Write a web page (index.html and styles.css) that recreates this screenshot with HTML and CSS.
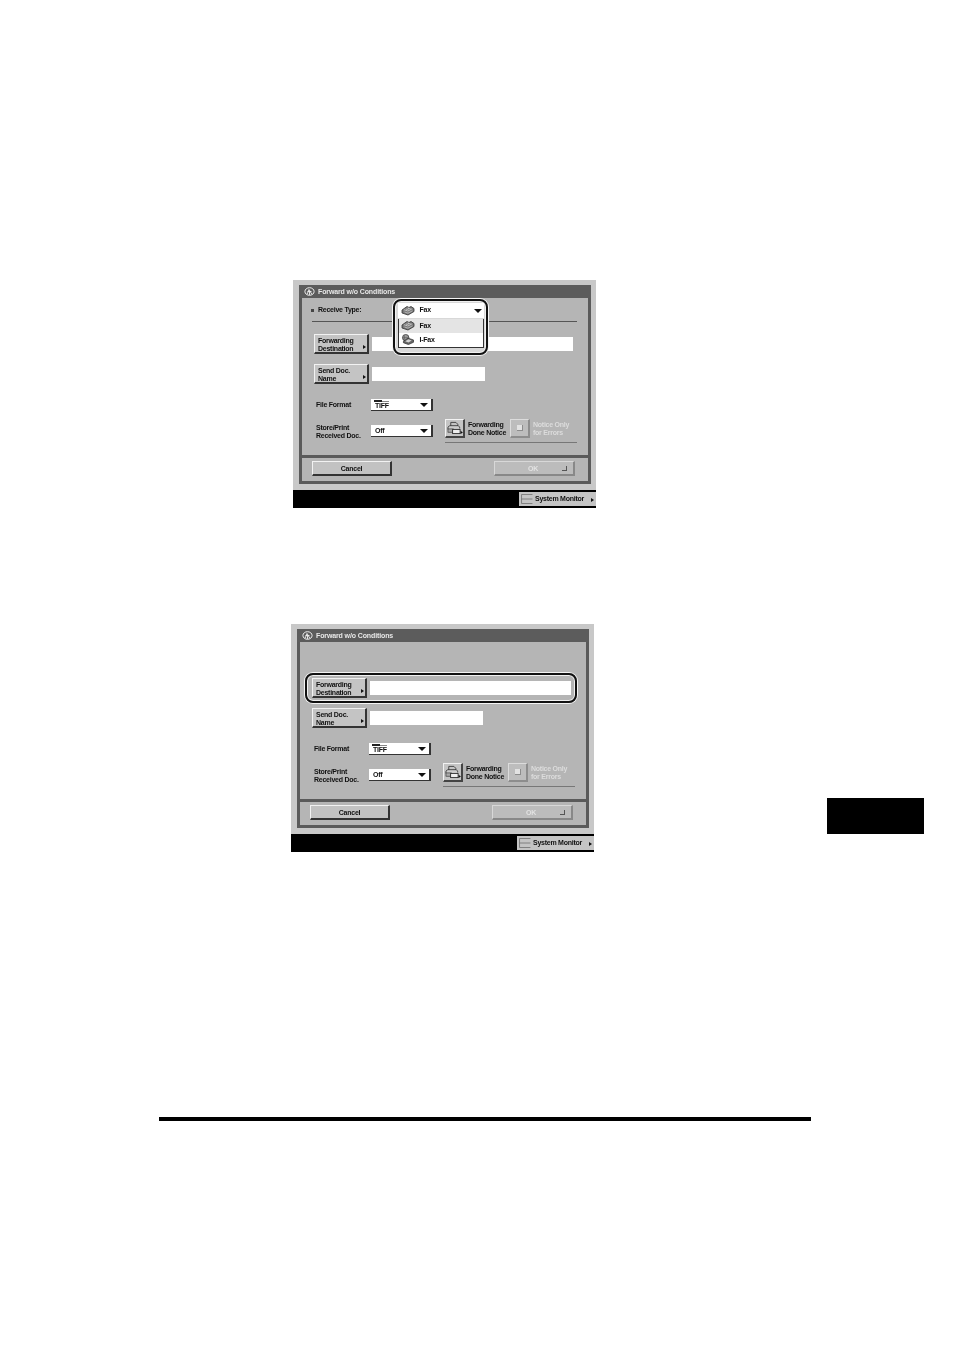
FILE: index.html
```html
<!DOCTYPE html>
<html lang="en">
<head>
    <meta charset="UTF-8">
    <title>Forward w/o Conditions</title>
    <link rel="stylesheet" href="styles.css">
</head>
<body>
    <svg class="defs" width="0" height="0">
        <symbol id="logo" viewBox="0 0 11 9">
            <ellipse cx="5.5" cy="4.5" rx="4.6" ry="3.8" fill="none" stroke="#eee" stroke-width="1"/>
            <path d="M3 7.5 L5 2.5 L8 7.5 M3.5 4.5 H7.5 M5.5 4.5 V8" fill="none" stroke="#eee" stroke-width="0.9"/>
        </symbol>
        <symbol id="fax" viewBox="0 0 14 11">
            <path d="M1 5 L6 1.5 L8 2.5 L10 1.5 L13 3.5 L13 6.5 L7 10 L1 8 Z" fill="#777" stroke="#333" stroke-width="0.8"/>
            <path d="M2.5 5 L7 2.6 L11.5 4 L7 6.6 Z" fill="#c4c4c4"/>
            <path d="M4 4.6 L7 3.4 M6 5.4 L9.5 3.8" stroke="#555" stroke-width="0.6"/>
            <path d="M3.5 7 L7 8.2 L11.5 5.8" fill="none" stroke="#ccc" stroke-width="0.7"/>
        </symbol>
        <symbol id="ifax" viewBox="0 0 14 12">
            <circle cx="4.5" cy="4" r="3.5" fill="#9a9a9a" stroke="#333" stroke-width="0.8"/>
            <path d="M3 1.5 V6.5 M1 4 H8" stroke="#444" stroke-width="0.5"/>
            <path d="M2 8 L7 4.5 L13 6.5 L13 9 L7.5 11.5 L2 9.5 Z" fill="#666" stroke="#333" stroke-width="0.8"/>
            <path d="M4 8 L7.5 5.8 L11 7 L7.5 9.2 Z" fill="#d4d4d4"/>
        </symbol>
        <symbol id="forward" viewBox="0 0 18 15">
            <path d="M5 6 V1.5 H10.5 L12.5 3.5 V6" fill="none" stroke="#333" stroke-width="0.9"/>
            <path d="M2 9 V6.5 L4 5 H13 L14.5 6.5 V8" fill="#ccc" stroke="#333" stroke-width="0.9"/>
            <rect x="2" y="8.5" width="6" height="3.5" fill="#aaa" stroke="#333" stroke-width="0.7"/>
            <rect x="7" y="9" width="8" height="4.5" fill="#eee" stroke="#222" stroke-width="0.9"/>
            <path d="M15.5 10.5 L18 12.2 L15.5 14 Z" fill="#111"/>
        </symbol>
        <symbol id="tiff" viewBox="0 0 15 3">
            <rect x="0" y="0" width="8" height="2" fill="#222"/>
            <path d="M8 1.5 H15" fill="none" stroke="#555" stroke-width="0.7"/>
        </symbol>
        <symbol id="monitor" viewBox="0 0 13 11">
            <path d="M0.5 10.5 V0.5 H12.5 M0.5 5.5 H12.5 M0.5 10.5 H12.5" fill="none" stroke="#666" stroke-width="0.8"/>
        </symbol>
    </svg>

    <div class="page">
        <div class="doc">
            <section class="screen screen-first">
                <div class="dialog">
                    <div class="title-bar">
                        <svg class="logo"><use href="#logo"/></svg>
                        <span>Forward w/o Conditions</span>
                    </div>
                    <div class="receive-row">
                        <i class="bullet"></i>
                        <span class="label">Receive Type:</span>
                    </div>
                    <div class="field-row dest-row">
                        <div class="btn-more"><span>Forwarding<br>Destination</span><i class="tri"></i></div>
                        <div class="field field-long"></div>
                    </div>
                    <div class="field-row send-row">
                        <div class="btn-more"><span>Send Doc.<br>Name</span><i class="tri"></i></div>
                        <div class="field field-short"></div>
                    </div>
                    <div class="format-row">
                        <span class="label row-label">File Format</span>
                        <div class="select select-tiff">
                            <svg class="tiff-mark"><use href="#tiff"/></svg>
                            <span class="tiff-text">TIFF</span>
                            <i class="down"></i>
                        </div>
                    </div>
                    <div class="store-row">
                        <span class="label row-label store-label">Store/Print<br>Received Doc.</span>
                        <div class="select store-select"><span>Off</span><i class="down"></i></div>
                        <div class="notice-group">
                            <div class="btn-icon"><svg class="forward-icon"><use href="#forward"/></svg></div>
                            <span class="label notice-text">Forwarding<br>Done Notice</span>
                            <div class="btn-icon btn-off"><i class="dot"></i></div>
                            <span class="label notice-text text-off">Notice Only<br>for Errors</span>
                        </div>
                    </div>
                    <div class="footer">
                        <div class="btn-wide">Cancel</div>
                        <div class="btn-wide btn-ok">OK<i class="enter"></i></div>
                    </div>
                </div>
                <div class="status-bar">
                    <div class="btn-monitor">
                        <svg class="monitor-icon"><use href="#monitor"/></svg>
                        <span>System Monitor</span>
                        <i class="tri"></i>
                    </div>
                </div>
                <div class="ring ring-popup">
                    <div class="popup-head">
                        <svg class="fax-icon"><use href="#fax"/></svg>
                        <span>Fax</span>
                        <i class="down"></i>
                    </div>
                    <div class="popup-list">
                        <div class="popup-item popup-current">
                            <svg class="fax-icon"><use href="#fax"/></svg>
                            <span>Fax</span>
                        </div>
                        <div class="popup-item">
                            <svg class="fax-icon"><use href="#ifax"/></svg>
                            <span>I-Fax</span>
                        </div>
                    </div>
                </div>
            </section>

            <section class="screen screen-second">
                <div class="dialog">
                    <div class="title-bar">
                        <svg class="logo"><use href="#logo"/></svg>
                        <span>Forward w/o Conditions</span>
                    </div>
                    <div class="receive-row receive-blank"></div>
                    <div class="field-row dest-row">
                        <div class="btn-more"><span>Forwarding<br>Destination</span><i class="tri"></i></div>
                        <div class="field field-long"></div>
                    </div>
                    <div class="field-row send-row">
                        <div class="btn-more"><span>Send Doc.<br>Name</span><i class="tri"></i></div>
                        <div class="field field-short"></div>
                    </div>
                    <div class="format-row">
                        <span class="label row-label">File Format</span>
                        <div class="select select-tiff">
                            <svg class="tiff-mark"><use href="#tiff"/></svg>
                            <span class="tiff-text">TIFF</span>
                            <i class="down"></i>
                        </div>
                    </div>
                    <div class="store-row">
                        <span class="label row-label store-label">Store/Print<br>Received Doc.</span>
                        <div class="select store-select"><span>Off</span><i class="down"></i></div>
                        <div class="notice-group">
                            <div class="btn-icon"><svg class="forward-icon"><use href="#forward"/></svg></div>
                            <span class="label notice-text">Forwarding<br>Done Notice</span>
                            <div class="btn-icon btn-off"><i class="dot"></i></div>
                            <span class="label notice-text text-off">Notice Only<br>for Errors</span>
                        </div>
                    </div>
                    <div class="footer">
                        <div class="btn-wide">Cancel</div>
                        <div class="btn-wide btn-ok">OK<i class="enter"></i></div>
                    </div>
                </div>
                <div class="status-bar">
                    <div class="btn-monitor">
                        <svg class="monitor-icon"><use href="#monitor"/></svg>
                        <span>System Monitor</span>
                        <i class="tri"></i>
                    </div>
                </div>
                <div class="ring ring-dest"></div>
            </section>

            <div class="rule"></div>
        </div>
        <div class="edge-tab"></div>
    </div>
</body>
</html>
```

FILE: styles.css
```css
body {
    margin: 0;
    background-color: #fff;
    font-family: "Liberation Sans", Arial, sans-serif;
    font-size: 7px;
    font-weight: bold;
    line-height: 7.5px;
    letter-spacing: -0.25px;
    color: #111;
}

.defs {
    position: absolute;
}

.page {
    display: flex;
    align-items: flex-start;
}

.doc {
    width: 827px;
    padding-top: 280px;
}

.edge-tab {
    width: 97px;
    height: 36px;
    margin-top: 798px;
    background-color: #000;
}

.rule {
    width: 652px;
    height: 4px;
    margin: 265px 0 0 159px;
    background-color: #000;
}

.screen {
    position: relative;
    width: 303px;
    padding-top: 5px;
    box-sizing: border-box;
    background-color: #c8c8c8;
    filter: blur(0.35px);
}

.screen-first { margin-left: 293px; }
.screen-second { margin: 116px 0 0 291px; }

.dialog {
    display: flex;
    flex-direction: column;
    height: 199px;
    margin: 0 5px 0 6px;
    border: 3px solid #5a5a5a;
    border-top: 0;
    box-sizing: border-box;
    background-color: #b5b5b5;
}

.title-bar {
    display: flex;
    align-items: center;
    height: 13px;
    margin: 0 -3px;
    padding-left: 5px;
    background-color: #5c5c5c;
    color: #e8e8e8;
    letter-spacing: -0.12px;
}

.logo {
    width: 11px;
    height: 9px;
    margin-right: 3px;
}

.receive-row {
    display: flex;
    align-items: center;
    height: 24px;
    margin: 0 11px 0 10px;
    padding-top: 1px;
    border-bottom: 1px solid #555;
    box-sizing: border-box;
}

.receive-blank { border-bottom: 0; }

.bullet {
    width: 3px;
    height: 3px;
    margin: 0 4px 0 -1px;
    background-color: #444;
}

.label { display: block; }

.field-row {
    display: flex;
    align-items: center;
    padding-left: 12px;
}

.dest-row { margin-top: 12px; }
.send-row { margin-top: 10px; }

.btn-more {
    display: flex;
    align-items: flex-start;
    justify-content: space-between;
    width: 55px;
    height: 20px;
    padding: 2px 1px 1px 3px;
    box-sizing: border-box;
    background-color: #c4c4c4;
    border: 1px solid #f2f2f2;
    border-right: 2px solid #333;
    border-bottom: 2px solid #333;
}

.btn-more .tri { margin-top: 8px; }

.tri {
    width: 0;
    height: 0;
    border-left: 3px solid #111;
    border-top: 2.5px solid transparent;
    border-bottom: 2.5px solid transparent;
}

.field {
    height: 14px;
    margin-left: 3px;
    background-color: #fff;
}

.field-long { width: 201px; }
.field-short { width: 113px; }

.format-row {
    display: flex;
    margin-top: 15px;
    padding-left: 14px;
}

.row-label { width: 55px; }

.format-row .row-label { line-height: 12px; }

.select {
    position: relative;
    display: flex;
    align-items: center;
    justify-content: space-between;
    width: 62px;
    height: 12px;
    padding: 0 3px 0 4px;
    box-sizing: border-box;
    background-color: #fff;
    border-right: 2px solid #333;
    border-bottom: 1px solid #333;
}

.tiff-mark {
    position: absolute;
    left: 3px;
    top: 1px;
    width: 15px;
    height: 3px;
}

.tiff-text {
    margin-top: 3px;
}

.down {
    width: 0;
    height: 0;
    border-top: 4px solid #111;
    border-left: 4px solid transparent;
    border-right: 4px solid transparent;
}

.store-row {
    display: flex;
    align-items: flex-start;
    margin-top: 8px;
    padding-left: 14px;
}

.store-label { margin-top: 5px; }
.store-select { margin-top: 6px; }

.notice-group {
    display: flex;
    align-items: center;
    width: 132px;
    margin-left: 12px;
    padding-bottom: 4px;
    border-bottom: 1px solid #777;
}

.btn-icon {
    display: flex;
    align-items: center;
    justify-content: center;
    width: 20px;
    height: 19px;
    box-sizing: border-box;
    background-color: #c4c4c4;
    border: 1px solid #f2f2f2;
    border-right: 2px solid #444;
    border-bottom: 2px solid #444;
}

.forward-icon {
    width: 17px;
    height: 14px;
}

.notice-text {
    margin-left: 3px;
    width: 42px;
}

.btn-off {
    background-color: #bdbdbd;
    border-right-color: #8d8d8d;
    border-bottom-color: #8d8d8d;
    border-top-color: #dcdcdc;
    border-left-color: #dcdcdc;
}

.dot {
    width: 5px;
    height: 5px;
    background-color: #e2e2e2;
    border-right: 1px solid #8c8c8c;
    border-bottom: 1px solid #8c8c8c;
}

.text-off { color: #dcdcdc; }

.footer {
    display: flex;
    justify-content: space-between;
    margin-top: auto;
    padding: 3px 13px 5px 10px;
    border-top: 3px solid #5a5a5a;
}

.btn-wide {
    position: relative;
    width: 80px;
    height: 15px;
    box-sizing: border-box;
    line-height: 13px;
    text-align: center;
    background-color: #c2c2c2;
    border: 1px solid #f2f2f2;
    border-right: 2px solid #333;
    border-bottom: 2px solid #333;
}

.btn-ok {
    width: 81px;
    padding-right: 2px;
    color: #e2e2e2;
    background-color: #bcbcbc;
    border-right-color: #888;
    border-bottom-color: #888;
    border-top-color: #d8d8d8;
    border-left-color: #d8d8d8;
}

.enter {
    position: absolute;
    right: 6px;
    bottom: 3px;
    width: 4px;
    height: 4px;
    border-right: 1px solid #555;
    border-bottom: 1px solid #555;
}

.status-bar {
    display: flex;
    justify-content: flex-end;
    align-items: center;
    height: 18px;
    margin-top: 6px;
    background-color: #000;
}

.btn-monitor {
    display: flex;
    align-items: center;
    width: 77px;
    height: 14px;
    padding-left: 2px;
    box-sizing: border-box;
    background-color: #c4c4c4;
}

.monitor-icon {
    width: 12px;
    height: 10px;
    margin-right: 2px;
}

.btn-monitor span {
    width: 56px;
}

.btn-monitor .tri { margin-top: 2px; }

/* callout rings drawn over the screen */
.ring {
    position: absolute;
    box-sizing: border-box;
    border: 2.5px solid #111;
    border-radius: 8px;
    box-shadow: 0 0 0 1px #f4f4f4, inset 0 0 0 1px #f0f0f0;
}

.ring-popup {
    left: 100px;
    top: 19px;
    width: 95px;
    height: 56px;
    padding: 1.5px 2.5px;
    background-color: #d8d8d8;
}

.ring-dest {
    left: 14px;
    top: 49px;
    width: 272px;
    height: 30px;
}

.popup-head,
.popup-item {
    display: flex;
    align-items: center;
}

.popup-head {
    position: relative;
    height: 15px;
    padding-left: 3px;
    background-color: #fff;
}

.popup-head .down {
    position: absolute;
    right: 2px;
    top: 6px;
}

.popup-list {
    margin-top: 1px;
    border: 1px solid #333;
    border-top: 0;
    background-color: #fff;
}

.popup-item {
    height: 14px;
    padding-left: 2px;
}

.popup-current { background-color: #e4e4e4; }

.fax-icon {
    width: 14px;
    height: 11px;
    margin-right: 5px;
}
```
